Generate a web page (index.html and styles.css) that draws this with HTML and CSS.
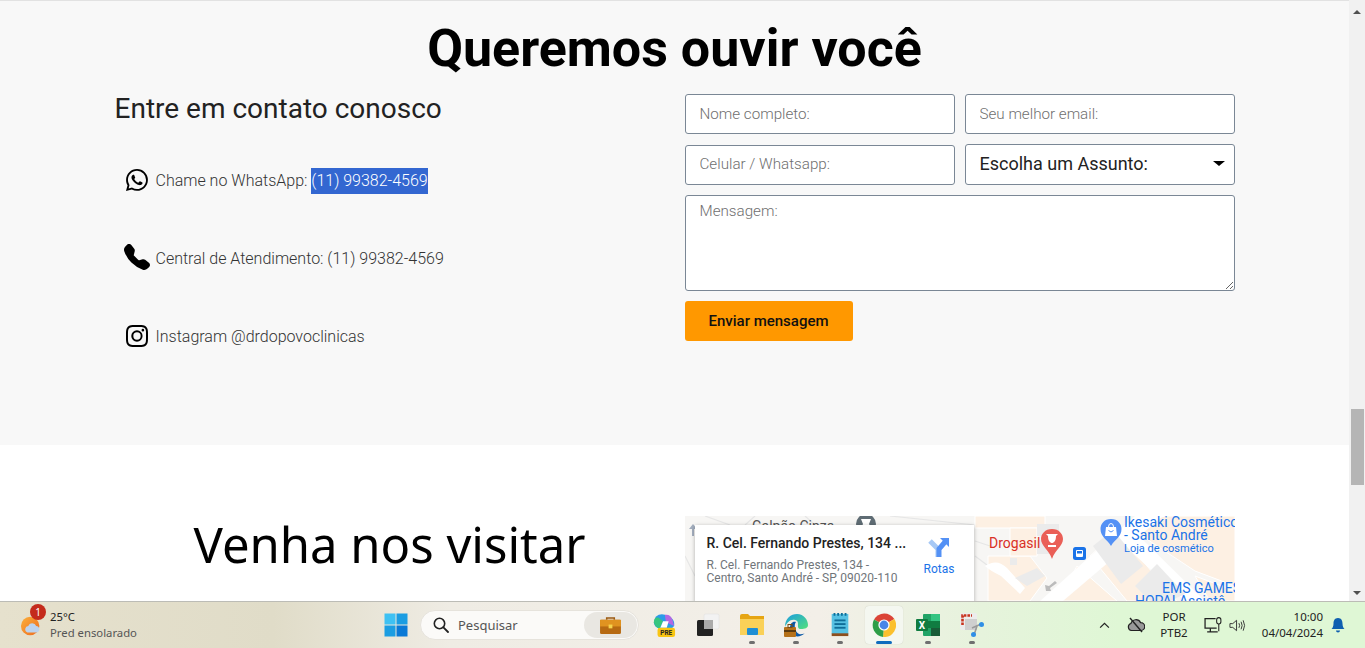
FILE: index.html
```html
<!DOCTYPE html>
<html lang="pt-BR">
<head>
<meta charset="utf-8">
<title>Queremos ouvir você</title>
<link rel="stylesheet" href="styles.css">
</head>
<body>
<div class="screen">
  <div class="browser">
    <main class="page">
      <section class="contact">
        <h1 class="contact-title">Queremos ouvir você</h1>
        <div class="container">
          <div class="col">
            <h2 class="contact-sub">Entre em contato conosco</h2>
            <ul class="channels">
              <li class="channel">
                <span class="channel-icon"><svg class="ic-wa" viewBox="0 0 16 16"><path d="M13.601 2.326A7.854 7.854 0 0 0 7.994 0C3.627 0 .068 3.558.064 7.926c0 1.399.366 2.76 1.057 3.965L0 16l4.204-1.102a7.933 7.933 0 0 0 3.79.965h.004c4.368 0 7.926-3.558 7.93-7.93A7.898 7.898 0 0 0 13.6 2.326zM7.994 14.521a6.573 6.573 0 0 1-3.356-.92l-.24-.144-2.494.654.666-2.433-.156-.251a6.56 6.56 0 0 1-1.007-3.505c0-3.626 2.957-6.584 6.591-6.584a6.56 6.56 0 0 1 4.66 1.931 6.557 6.557 0 0 1 1.928 4.66c-.004 3.639-2.961 6.592-6.592 6.592zm3.615-4.934c-.197-.099-1.17-.578-1.353-.646-.182-.065-.315-.099-.445.099-.133.197-.513.646-.627.775-.114.133-.232.148-.43.05-.197-.1-.836-.308-1.592-.985-.59-.525-.985-1.175-1.103-1.372-.114-.198-.011-.304.088-.403.087-.088.197-.232.296-.346.1-.114.133-.198.198-.33.065-.134.034-.248-.015-.347-.05-.099-.445-1.076-.612-1.47-.16-.389-.323-.335-.445-.34-.114-.007-.247-.007-.38-.007a.729.729 0 0 0-.529.247c-.182.198-.691.677-.691 1.654 0 .977.71 1.916.81 2.049.098.133 1.394 2.132 3.383 2.992.47.205.84.326 1.129.418.475.152.904.129 1.246.08.38-.058 1.171-.48 1.338-.943.164-.464.164-.86.114-.943-.049-.084-.182-.133-.38-.232z"/></svg></span>
                <span>Chame no WhatsApp: <span class="selected">(11) 99382-4569</span></span>
              </li>
              <li class="channel">
                <span class="channel-icon"><svg class="ic-phone" viewBox="0 0 16 16"><path d="M1.885.511a1.745 1.745 0 0 1 2.61.163L6.29 2.98c.329.423.445.974.315 1.494l-.547 2.19a.678.678 0 0 0 .178.643l2.457 2.457a.678.678 0 0 0 .644.178l2.189-.547a1.745 1.745 0 0 1 1.494.315l2.306 1.794c.829.645.905 1.87.163 2.611l-1.034 1.034c-.74.74-1.846 1.065-2.877.702a18.634 18.634 0 0 1-7.01-4.42 18.634 18.634 0 0 1-4.42-7.009c-.362-1.03-.037-2.137.703-2.877L1.885.511z"/></svg></span>
                <span>Central de Atendimento: (11) 99382-4569</span>
              </li>
              <li class="channel">
                <span class="channel-icon"><svg class="ic-wa" viewBox="0 0 16 16"><path d="M8 0C5.829 0 5.556.01 4.703.048 3.85.088 3.269.222 2.76.42a3.917 3.917 0 0 0-1.417.923A3.927 3.927 0 0 0 .42 2.76C.222 3.268.087 3.85.048 4.7.01 5.555 0 5.827 0 8.001c0 2.172.01 2.444.048 3.297.04.852.174 1.433.372 1.942.205.526.478.972.923 1.417.444.445.89.719 1.416.923.51.198 1.09.333 1.942.372C5.555 15.99 5.827 16 8 16s2.444-.01 3.298-.048c.851-.04 1.434-.174 1.943-.372a3.916 3.916 0 0 0 1.416-.923c.445-.445.718-.891.923-1.417.197-.509.332-1.09.372-1.942C15.99 10.445 16 10.173 16 8s-.01-2.445-.048-3.299c-.04-.851-.175-1.433-.372-1.941a3.926 3.926 0 0 0-.923-1.417A3.911 3.911 0 0 0 13.24.42c-.51-.198-1.092-.333-1.943-.372C10.443.01 10.172 0 7.998 0h.003zm-.717 1.442h.718c2.136 0 2.389.007 3.232.046.78.035 1.204.166 1.486.275.373.145.64.319.92.599.28.28.453.546.598.92.11.281.24.705.275 1.485.039.843.047 1.096.047 3.231s-.008 2.389-.047 3.232c-.035.78-.166 1.203-.275 1.485a2.47 2.47 0 0 1-.599.919c-.28.28-.546.453-.92.598-.28.11-.704.24-1.485.276-.843.038-1.096.047-3.232.047s-2.39-.009-3.233-.047c-.78-.036-1.203-.166-1.485-.276a2.478 2.478 0 0 1-.92-.598 2.48 2.48 0 0 1-.6-.92c-.109-.281-.24-.705-.275-1.485-.038-.843-.046-1.096-.046-3.233 0-2.136.008-2.388.046-3.231.036-.78.166-1.204.276-1.486.145-.373.319-.64.599-.92.28-.28.546-.453.92-.598.282-.11.705-.24 1.485-.276.738-.034 1.024-.044 2.515-.045v.002zm4.988 1.328a.96.96 0 1 0 0 1.92.96.96 0 0 0 0-1.92zm-4.27 1.122a4.109 4.109 0 1 0 0 8.217 4.109 4.109 0 0 0 0-8.217zm0 1.441a2.667 2.667 0 1 1 0 5.334 2.667 2.667 0 0 1 0-5.334z"/></svg></span>
                <span>Instagram @drdopovoclinicas</span>
              </li>
            </ul>
          </div>
          <div class="col">
            <form class="form">
              <input class="field" type="text" placeholder="Nome completo:">
              <input class="field" type="email" placeholder="Seu melhor email:">
              <input class="field field-phone" type="text" placeholder="Celular / Whatsapp:">
              <div class="select-wrap">
                <select class="select"><option>Escolha um Assunto:</option></select>
              </div>
              <textarea class="message" placeholder="Mensagem:"></textarea>
              <button class="send" type="button">Enviar mensagem</button>
            </form>
          </div>
        </div>
      </section>
      <section class="visit">
        <div class="container">
          <div class="col visit-col">
            <h2 class="visit-title">Venha nos visitar</h2>
          </div>
          <div class="col">
            <div class="map">
              <svg class="map-art" viewBox="0 0 550 300" preserveAspectRatio="none">
                <rect width="550" height="300" fill="#f7f6f4"/>
                <g fill="none" stroke="#e6e6e6" stroke-width="1.2">
                  <path d="M0 40 L10 60 M20 0 L45 9 M70 0 L60 9 M120 0 L130 9 M205 0 L290 9"/>
                  <path d="M290 40 L330 70 M290 25 L305 30"/>
                </g>
                <g fill="#fdf0e3" stroke="#fff" stroke-width="1">
                  <rect x="290" y="0" width="70" height="12"/>
                  <path d="M303 40 L345 40 L362 62 L345 85 L303 85Z"/>
                  <path d="M325 12 L352 12 L352 40 L325 40Z"/>
                  <path d="M392 50 L432 85 L372 85Z"/>
                  <path d="M405 40 L432 15 L492 85 L442 85Z"/>
                  <path d="M442 10 L480 0 L550 0 L550 70 L510 55Z"/>
                  <path d="M510 60 L550 75 L550 85 L525 85Z"/>
                </g>
                <g fill="#fff">
                  <path d="M355 85 L450 0 L478 0 L378 85Z"/>
                  <path d="M440 30 L500 85 L520 85 L452 18Z"/>
                  <path d="M300 50 Q312 42 322 52 L340 72 L335 78 L316 60 Q304 54 300 50Z"/>
                </g>
                <g fill="#ebebeb">
                  <path d="M408 30 L428 14 L458 50 L436 68Z"/>
                  <path d="M450 70 L472 48 L500 78 L485 85 L465 85Z"/>
                  <rect x="352" y="8" width="22" height="12"/>
                  <rect x="352" y="24" width="18" height="14"/>
                  <rect x="325" y="42" width="7" height="7"/>
                  <path d="M330 62 L352 52 L360 60 L342 70Z"/>
                </g>
                <path d="M370 65 L364 70 L360 69 L361 75 L366 75 L365 72 L372 67Z" fill="#bcbcbc"/>
                <circle cx="181" cy="8" r="10" fill="#5f6c74"/>
                <path d="M176 3 L186 3 L184 8 L186 12 L176 12 L178 8Z" fill="#fff"/>
                <path d="M8 8 L4 13 L7 13 L7 20 L9 20 L9 13 L12 13Z" fill="#a4afbf"/>
                <path d="M367 13 C374 13 378 18 378 23 C378 30 370 34 367 43 C364 34 356 30 356 23 C356 18 360 13 367 13Z" fill="#ea5f57"/>
                <path d="M361 18 L373 18 L371 20 C371 26 368 27 367 27 C366 27 363 26 363 20Z M363 29 L371 29 L371 31 L363 31Z" fill="#fff"/>
                <rect x="388" y="31" width="13" height="13" rx="2.5" fill="#1a73e8"/>
                <rect x="391" y="34" width="7" height="7" rx="1" fill="#fff"/>
                <rect x="392" y="35" width="5" height="2.5" fill="#1a73e8"/>
                <path d="M426 3 C433 3 436.500 8 436.500 13 C436.500 21 430 23 426 30 C422 23 415.500 21 415.500 13 C415.500 8 419 3 426 3Z" fill="#5491f5"/>
                <path d="M421 11 L431 11 L432 20 L420 20Z" fill="#fff"/>
                <path d="M423.500 11 Q423.500 7.500 426 7.500 Q428.500 7.500 428.500 11" fill="none" stroke="#fff" stroke-width="1"/>
                <path d="M423.500 14.500 Q426 17.500 428.500 14.500" fill="none" stroke="#5491f5" stroke-width="1"/>
                <text class="map-label red" x="304" y="32">Drogasil</text>
                <text class="map-label blue" x="439" y="11">Ikesaki Cosmético</text>
                <text class="map-label blue" x="439" y="24">- Santo André</text>
                <text class="map-small blue" x="439" y="36">Loja de cosmético</text>
                <text class="map-label blue" x="477" y="77">EMS GAMES</text>
                <text class="map-label blue" x="450" y="90">HOPAI Assistê</text>
                <text class="map-label grey" x="67" y="15">Galpão Cinza</text>
              </svg>
              <div class="map-card">
                <div class="map-card-text">
                  <div class="map-card-title">R. Cel. Fernando Prestes, 134 ...</div>
                  <div class="map-card-addr">R. Cel. Fernando Prestes, 134 -<br>Centro, Santo André - SP, 09020-110</div>
                </div>
                <div class="map-route">
                  <svg class="ic-route" viewBox="0 0 22 22"><path d="M10 21 L10 13 L2 5" fill="none" stroke="#a6c8f5" stroke-width="5"/><path d="M11 21 L11 13 L17 6" fill="none" stroke="#5491f5" stroke-width="5"/><path d="M12 2 L21 2 L21 11Z" fill="#5491f5"/></svg>
                  <span>Rotas</span>
                </div>
              </div>
            </div>
          </div>
        </div>
      </section>
    </main>
    <aside class="scrollbar">
      <span class="arrow-up"></span>
      <span class="thumb"></span>
      <span class="arrow-down"></span>
    </aside>
  </div>

  <footer class="taskbar">
    <div class="tb-weather">
      <span class="weather-icon">
        <svg viewBox="0 0 26 24"><defs><linearGradient id="sun" x1="0" y1="0" x2="1" y2="1"><stop offset="0" stop-color="#fbb03b"/><stop offset="1" stop-color="#ee6c1f"/></linearGradient></defs><circle cx="11" cy="13" r="10" fill="url(#sun)"/><path d="M8 20 a3.500 3.500 0 0 1 1-6.800 a4.500 4.500 0 0 1 8.500-.2 a3.600 3.600 0 0 1 1 7Z" fill="#bcd3ee"/></svg>
        <span class="badge">1</span>
      </span>
      <span class="weather-text"><span class="temp">25°C</span><span class="cond">Pred ensolarado</span></span>
    </div>
    <span class="tb-btn">
      <svg class="ic-24" viewBox="0 0 24 24"><rect x="0.500" y="0.500" width="11" height="11" fill="#3ec1f3"/><rect x="12.500" y="0.500" width="11" height="11" fill="#1b9de2"/><rect x="0.500" y="12.500" width="11" height="11" fill="#1b9de2"/><rect x="12.500" y="12.500" width="11" height="11" fill="#0a79d6"/></svg>
    </span>
    <div class="tb-search">
      <svg class="ic-mag" viewBox="0 0 16 16"><circle cx="6.500" cy="6.500" r="5.200" fill="none" stroke="#222" stroke-width="1.600"/><path d="M10.400 10.400 L15 15" stroke="#222" stroke-width="1.800" stroke-linecap="round"/></svg>
      <span class="search-text">Pesquisar</span>
      <span class="search-pill">
        <svg class="ic-bag" viewBox="0 0 24 20"><path d="M8 4 V2 H16 V4" fill="none" stroke="#9a5a12" stroke-width="1.600"/><rect x="1" y="4" width="22" height="15" rx="1.500" fill="#b76a12"/><rect x="1" y="4" width="22" height="7" fill="#e09320"/><rect x="10" y="9" width="4" height="4" fill="#f6d34c"/></svg>
      </span>
    </div>
    <div class="tb-apps">
      <span class="tb-btn">
        <svg class="ic-24" viewBox="0 0 26 26"><path d="M4 4 Q9 0 14 2 L20 5 Q25 8 24 14 L21 17 L8 17 Q2 15 2 10Z" fill="#2b9be8"/><path d="M14 2 Q20 1 22 7 L24 14 L15 10Z" fill="#b268e3"/><path d="M2 10 Q2 4 7 5 L12 9 L8 17 Q3 15 2 10Z" fill="#37c57f"/><path d="M12 9 L18 9 L16 16 L9 16Z" fill="#fff"/><rect x="6" y="16" width="19" height="10" rx="2.500" fill="#f9c513"/><text class="pre" x="15.500" y="24">PRE</text></svg>
      </span>
      <span class="tb-btn">
        <svg class="ic-24" viewBox="0 0 24 24"><rect x="8" y="1" width="15" height="15" rx="1.500" fill="#f2f2f2" stroke="#ddd" stroke-width=".5"/><rect x="1" y="7" width="16" height="16" rx="1.500" fill="#222"/><rect x="8" y="7" width="9" height="9" fill="#aaa"/></svg>
      </span>
      <span class="tb-btn running">
        <svg class="ic-24" viewBox="0 0 24 24"><path d="M0 3 Q0 1 2 1 H8 L10 3 H24 V12 H0Z" fill="#e6a513"/><path d="M0 6 H24 V22 H0Z" fill="#fad158"/><rect x="7" y="15" width="11" height="7" rx="1" fill="#1f8fd4"/></svg>
      </span>
      <span class="tb-btn running">
        <svg class="ic-24" viewBox="0 0 24 24"><defs><linearGradient id="edge" x1="0" y1="0" x2="1" y2="1"><stop offset="0" stop-color="#1b9de2"/><stop offset="1" stop-color="#54e07b"/></linearGradient></defs><path d="M1 14 C1 5 7 1 13 1 C20 1 24 7 24 12 C24 15 21 16 17 16 C11 16 17 8 11 7 C6 6 3 10 1 14Z" fill="url(#edge)"/><path d="M6 15 C6 10 9 8 12 9 C10 11 10 18 15 21 C18 22 21 20 21 20 C18 23 14 24 11 23 C8 22 6 19 6 15Z" fill="#0c5aa8"/><rect x="0" y="14" width="12" height="10" rx="1" fill="#b5711a"/><rect x="0" y="17" width="12" height="2" fill="#5a3a10"/><rect x="4" y="11.500" width="4" height="3" fill="none" stroke="#7a4d12"/></svg>
      </span>
      <span class="tb-btn running">
        <svg class="ic-24" viewBox="0 0 20 26"><rect x="1" y="1" width="18" height="22" fill="#56c1e3"/><rect x="1" y="22" width="18" height="3" fill="#8d4f1e"/><g fill="#0f6e99"><rect x="4" y="7" width="12" height="2"/><rect x="4" y="11" width="12" height="2"/><rect x="4" y="15" width="12" height="2"/><rect x="3" y="0" width="2" height="3"/><rect x="7" y="0" width="2" height="3"/><rect x="11" y="0" width="2" height="3"/><rect x="15" y="0" width="2" height="3"/></g></svg>
      </span>
      <span class="tb-btn active">
        <svg class="ic-24" viewBox="0 0 24 24"><path d="M12 12 L2 6.500 A12 12 0 0 1 22.400 6 Z" fill="#db4437"/><path d="M12 12 L22.400 6 A12 12 0 0 1 11 24 Z" fill="#fbc02d"/><path d="M12 12 L11 24 A12 12 0 0 1 2 6.500 Z" fill="#2e9e48"/><circle cx="12" cy="12" r="5.600" fill="#fff"/><circle cx="12" cy="12" r="4.400" fill="#4a86e8"/></svg>
      </span>
      <span class="tb-btn running">
        <svg class="ic-24" viewBox="0 0 24 24"><rect x="7" y="1" width="17" height="22" rx="1" fill="#21a366"/><rect x="15" y="1" width="9" height="7" fill="#33c481"/><rect x="7" y="8" width="17" height="7" fill="#107c41"/><rect x="15" y="15" width="9" height="8" fill="#185c37"/><rect x="0" y="6" width="12" height="12" rx="1" fill="#107c41"/><text class="xl" x="6" y="15.500">X</text></svg>
      </span>
      <span class="tb-btn running">
        <svg class="ic-24" viewBox="0 0 24 24"><rect x="0" y="0" width="17" height="17" rx="2" fill="#ececec"/><rect x="5" y="6" width="12" height="11" fill="#cfcfcf"/><path d="M2.500 12 V2.500 H12" fill="none" stroke="#c8331e" stroke-width="2.600" stroke-dasharray="2.600 1"/><path d="M12 15 L21 11 M14 22 L17 13" stroke="#9a9a9a" stroke-width="1.600"/><circle cx="21.500" cy="11.500" r="2.500" fill="#2f8fe6"/><circle cx="13.500" cy="21.500" r="2.500" fill="#2f8fe6"/></svg>
      </span>
    </div>
    <div class="tb-tray">
      <svg class="ic-chev" viewBox="0 0 12 8"><path d="M1 6.500 L6 1.500 L11 6.500" fill="none" stroke="#222" stroke-width="1.400"/></svg>
      <svg class="ic-cloud" viewBox="0 0 18 16"><path d="M4.500 13.500 a3.600 3.600 0 0 1-.6-7 a5.200 5.200 0 0 1 9.700-.8 a3.900 3.900 0 0 1 .4 7.800Z" fill="#999" stroke="#222" stroke-width="1.200"/><path d="M3 1 L15 15" stroke="#222" stroke-width="1.400"/></svg>
      <span class="lang"><span>POR</span><span>PTB2</span></span>
      <span class="tray-icons">
        <svg class="ic-net" viewBox="0 0 18 16"><path d="M11 2 H1 V11 H12" fill="none" stroke="#222" stroke-width="1.200"/><path d="M6 11 V14 M3 14.500 H13" stroke="#222" stroke-width="1.200"/><rect x="12" y="1" width="4" height="6" rx="2" fill="none" stroke="#222" stroke-width="1"/><path d="M14 7 V14" stroke="#222" stroke-width="1"/></svg>
        <svg class="ic-vol" viewBox="0 0 18 14"><path d="M1 5 H4 L8 1.500 V12.500 L4 9 H1Z" fill="none" stroke="#333" stroke-width="1"/><path d="M10.500 4.500 Q12 7 10.500 9.500 M12.800 3 Q15 7 12.800 11 M15 1.500 Q18 7 15 12.500" fill="none" stroke="#333" stroke-width="1"/></svg>
      </span>
      <span class="clock"><span>10:00</span><span>04/04/2024</span></span>
      <svg class="ic-bell" viewBox="0 0 14 16"><path d="M7 1 C10.500 1 11.500 4 11.500 6.500 C11.500 9.500 12.500 11 13.500 12 H0.500 C1.500 11 2.500 9.500 2.500 6.500 C2.500 4 3.500 1 7 1Z M5 13.500 H9 C9 16 5 16 5 13.500Z" fill="#0f5fb0"/></svg>
    </div>
  </footer>
</div>
</body>
</html>
```
FILE: styles.css
```css
* { box-sizing: border-box; }
html, body { margin: 0; padding: 0; height: 100%; overflow: hidden; }
body { font-family: Roboto, "Liberation Sans", sans-serif; background: #fff; }

.screen { display: flex; flex-direction: column; height: 648px; width: 1365px; }
.browser { display: flex; height: 601px; flex: none; }
.page { flex: 1; min-width: 0; overflow: hidden; }

.scrollbar { width: 16px; background: #f1f1f1; display: flex; flex-direction: column; align-items: center; position: relative; }
.arrow-up { margin-top: 10px; width: 0; height: 0; border: 4px solid transparent; border-top: 0; border-bottom: 4px solid #505050; }
.thumb { position: absolute; top: 409px; left: 2px; width: 13px; height: 76px; background: #b5b5b5; }
.arrow-down { position: absolute; bottom: 6px; width: 0; height: 0; border: 4px solid transparent; border-bottom: 0; border-top: 4px solid #505050; }

.container { width: 1140px; margin: 0 auto; display: grid; grid-template-columns: 570px 570px; }
.col { padding: 0 10px; min-width: 0; }

.contact { background: #f8f8f8; height: 445px; border-top: 1px solid #e2e2e2; padding-top: 16px; }
.contact-title { margin: 0 0 14px; height: 63px; font-size: 52px; line-height: 63px; font-weight: 700; text-align: center; color: #000; }
.contact-sub { margin: -2px 0 0; font-size: 28px; line-height: 34px; font-weight: 400; color: #222; }

.channels { list-style: none; margin: 16px 0 0; padding: 0; }
.channel { display: flex; align-items: center; height: 78px; padding-left: 9px; gap: 6px; font-size: 16px; line-height: 26px; font-weight: 300; color: #333; }
.channel-icon { display: flex; justify-content: center; width: 26px; flex: none; margin-top: -2px; }
.ic-wa { width: 22px; height: 22px; fill: #000; }
.ic-phone { width: 26px; height: 26px; fill: #000; margin-top: -3px; }
.selected { display: inline-block; background: #3367d1; color: #fff; line-height: 26px; }

.form { display: grid; grid-template-columns: 270px 270px; column-gap: 10px; align-items: start; }
.field { height: 40px; padding: 0 14px; margin-bottom: 11px; border: 1px solid #7a8795; border-radius: 3px; background: #fff; font: 300 15.2px Roboto, sans-serif; color: #222; outline: none; width: 100%; }
.field::placeholder, .message::placeholder { color: #6f6f6f; opacity: 1; }
.field-phone { margin-bottom: 10px; padding-bottom: 2px; }
.select-wrap { position: relative; margin-top: -1px; }
.select-wrap::after { content: ""; position: absolute; right: 10px; top: 17px; border: 6px solid transparent; border-bottom: 0; border-top: 5px solid #000; }
.select { display: block; appearance: none; width: 100%; height: 41px; padding: 0 14px 2px; border: 1px solid #7a8795; border-radius: 3px; background: #fff; font: 400 18px Roboto, sans-serif; color: #222; }
.message { grid-column: 1 / -1; display: block; width: 100%; height: 96px; padding: 6px 14px; border: 1px solid #7a8795; border-radius: 3px; background: #fff; font: 300 15.2px/18px Roboto, sans-serif; outline: none; }
.send { margin-top: 10px; width: 168px; height: 40px; background: #ff9800; border: 0; border-radius: 3px; font: 500 15px Roboto, sans-serif; color: #111; padding: 0; }

.visit { background: #fff; padding-top: 70px; }
.visit-col { display: flex; justify-content: center; }
.visit-title { margin: 0; font-family: "Noto Sans", sans-serif; font-size: 49px; line-height: 58px; font-weight: 400; color: #000; }

.map { position: relative; height: 300px; overflow: hidden; margin-top: 1px; }
.map-art { display: block; width: 550px; height: 300px; }
.map-label { font: 400 14px Roboto, sans-serif; }
.map-small { font: 400 11px Roboto, sans-serif; }
.red { fill: #d93025; }
.blue { fill: #1a73e8; }
.grey { fill: #555; }
.map-card { position: absolute; left: 10px; top: 9px; width: 279px; height: 120px; background: #fff; box-shadow: 0 1px 4px rgba(0,0,0,.3); padding: 9px 12px; display: flex; justify-content: space-between; }
.map-card-title { font-size: 14px; line-height: 18px; font-weight: 500; color: #222; white-space: nowrap; }
.map-card-addr { margin-top: 7px; font-size: 12px; line-height: 13px; color: #70757a; white-space: nowrap; }
.map-route { display: flex; flex-direction: column; align-items: center; gap: 4px; margin-right: 7px; padding-top: 2px; color: #1a73e8; font-size: 12px; line-height: 14px; }
.ic-route { width: 22px; height: 22px; }

.taskbar { display: flex; align-items: center; height: 47px; flex: none; border-top: 1px solid #bcbcb6; background: linear-gradient(90deg, #e6e1cd 0%, #e0dcc8 20%, #efece4 33%, #f3efe8 60%, #e6f3dc 72%, #dff7d5 82%, #dff7d5 100%); font-family: "Noto Sans", sans-serif; color: #222; }
.tb-weather { display: flex; align-items: center; width: 374px; padding-left: 20px; flex: none; gap: 6px; }
.weather-icon { position: relative; width: 24px; height: 24px; display: block; }
.weather-icon svg { display: block; width: 24px; height: 24px; }
.badge { position: absolute; left: 10px; top: -9px; width: 16px; height: 16px; border-radius: 50%; background: #c42b1c; color: #fff; font-size: 10px; line-height: 16px; text-align: center; }
.weather-text { display: flex; flex-direction: column; font-size: 11.3px; line-height: 16px; }
.cond { color: #555; }

.tb-btn { position: relative; display: flex; align-items: center; justify-content: center; width: 44px; height: 38px; flex: none; }
.ic-24 { width: 24px; height: 24px; display: block; }
.running::after { content: ""; position: absolute; bottom: 0; left: 19px; width: 6px; height: 3px; border-radius: 2px; background: #6f6f6f; }
.active { background: #f4f7f0; border-radius: 4px; width: 38px; margin: 0 3px; box-shadow: 0 0 1px rgba(0,0,0,.2); }
.active::after { content: ""; position: absolute; bottom: 0; left: 11px; width: 16px; height: 3px; border-radius: 2px; background: #0f6cbd; }

.tb-search { display: flex; align-items: center; width: 219px; height: 30px; margin-left: 2px; flex: none; padding: 0 1px 0 12px; background: #fbfaf8; border-radius: 15px; border: 1px solid #e6e3dc; font-size: 13px; color: #555; }
.ic-mag { width: 16px; height: 16px; }
.search-text { margin-left: 9px; flex: 1; }
.search-pill { display: flex; align-items: center; justify-content: center; width: 53px; height: 26px; border-radius: 13px; background: #e9e7e2; }
.ic-bag { width: 23px; height: 19px; }
.tb-apps { display: flex; margin-left: 3px; flex: none; }

.tb-tray { display: flex; align-items: center; flex: 1; padding-left: 105px; font-size: 11.5px; }
.ic-chev { width: 11px; height: 7px; flex: none; }
.ic-cloud { width: 18px; height: 16px; margin-left: 17px; flex: none; }
.lang { display: flex; flex-direction: column; align-items: center; width: 36px; margin-left: 11px; line-height: 16px; }
.tray-icons { display: flex; align-items: center; gap: 6px; margin-left: 12px; }
.ic-net { width: 19px; height: 18px; }
.ic-vol { width: 17px; height: 15px; }
.clock { display: flex; flex-direction: column; align-items: flex-end; width: 77px; margin-left: 0; line-height: 16px; }
.ic-bell { width: 14px; height: 16px; margin-left: 8px; flex: none; }
.pre { font: 700 7px Roboto, sans-serif; fill: #222; text-anchor: middle; }
.xl { font: 700 10px Roboto, sans-serif; fill: #fff; text-anchor: middle; }
```
